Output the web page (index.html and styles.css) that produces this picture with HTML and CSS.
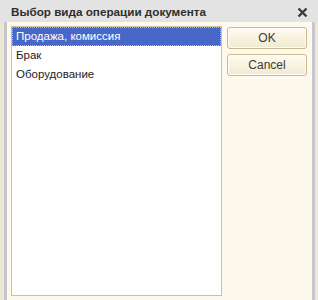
FILE: index.html
```html
<!DOCTYPE html>
<html lang="ru">

<head>
    <meta charset="UTF-8">
    <meta name="viewport" content="width=device-width, initial-scale=1.0">
    <link rel="stylesheet" href="styles.css">
</head>

<body>
    <div class="window">
        <div class="titlebar">
            <span class="title">Выбор вида операции документа</span>
            <button class="btn-close" aria-label="Закрыть">
                <svg width="11" height="11" viewBox="0 0 11 11">
                    <path d="M1.5 1.5 L9.5 9.5 M9.5 1.5 L1.5 9.5" stroke="#3a3a3a" stroke-width="2.4" fill="none" />
                </svg>
            </button>
        </div>
        <div class="body">
            <ul class="list">
                <li class="list-item selected">Продажа, комиссия</li>
                <li class="list-item">Брак</li>
                <li class="list-item">Оборудование</li>
            </ul>
            <div class="actions">
                <button class="btn">OK</button>
                <button class="btn">Cancel</button>
            </div>
        </div>
    </div>
</body>

</html>
```

FILE: styles.css
```css
html,
body {
    margin: 0;
    padding: 0;
}

.window {
    width: 318px;
    height: 300px;
    display: flex;
    flex-direction: column;
    background-color: #ece6d4;
    font-family: 'Liberation Sans', Arial, sans-serif;
}

.titlebar {
    height: 22px;
    flex: none;
    display: flex;
    align-items: center;
    justify-content: space-between;
    padding: 0 10px 0 11px;
    background-color: #e3e3e3;
}

.title {
    font-size: 11.7px;
    font-weight: bold;
    color: #2e2e2e;
    padding-top: 1px;
}

.btn-close {
    width: 11px;
    height: 11px;
    padding: 0;
    border: none;
    background: none;
    display: flex;
    margin-top: 2px;
}

.body {
    flex: 1;
    display: flex;
    gap: 5px;
    margin: 0 3px 0 4px;
    padding: 4px 5px 4px 4px;
    border-left: 3px solid #c6c7cd;
    border-right: 3px solid #c6c7cd;
    background-color: #fdf9ec;
}

.list {
    width: 209px;
    margin: 0;
    padding: 0;
    list-style: none;
    background-color: #ffffff;
    border: 1px solid #cbc19c;
}

.list-item {
    height: 19px;
    line-height: 19px;
    padding-left: 4px;
    font-size: 11.5px;
    color: #1c1c1c;
    box-sizing: border-box;
}

.list-item.selected {
    background-color: #4768c9;
    color: #ffffff;
    outline: 1px dotted #a9b8e8;
    outline-offset: -1px;
}

.actions {
    display: flex;
    flex-direction: column;
    gap: 5px;
    padding-top: 1px;
}

.btn {
    width: 80px;
    height: 22px;
    padding: 0;
    border: 1px solid #c8b98e;
    border-radius: 3px;
    background: linear-gradient(#fffcf0, #f1e9d0);
    box-shadow: inset 0 0 0 1px #fffdf5;
    font-family: 'Liberation Sans', Arial, sans-serif;
    font-size: 12px;
    color: #3a3a3a;
    cursor: pointer;
}

.btn:hover {
    background: linear-gradient(#fffef6, #f5eed9);
}
```
